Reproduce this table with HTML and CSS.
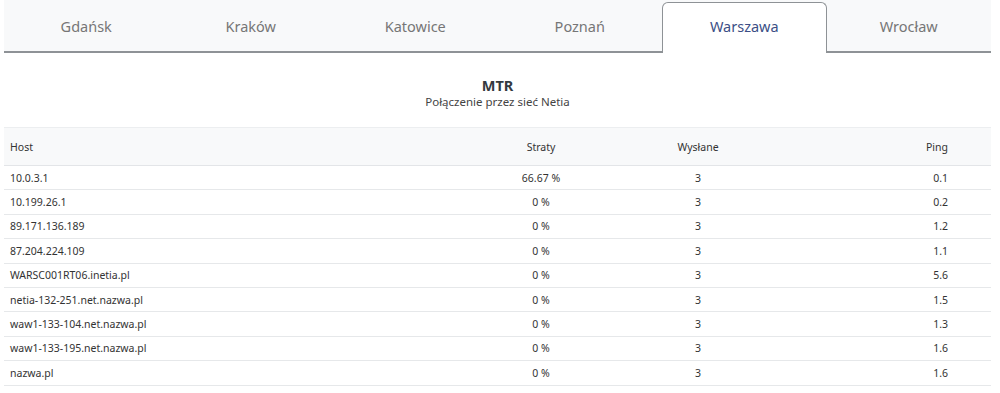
FILE: index.html
```html
<!DOCTYPE html>
<html lang="pl">
<head>
<meta charset="utf-8">
<title>MTR</title>
<link rel="stylesheet" href="styles.css">
</head>
<body>
<div class="page">
  <nav class="tabs">
    <a class="tab">Gdańsk</a>
    <a class="tab">Kraków</a>
    <a class="tab">Katowice</a>
    <a class="tab">Poznań</a>
    <a class="tab active">Warszawa</a>
    <a class="tab">Wrocław</a>
  </nav>
  <header class="head">
    <h1 class="title">MTR</h1>
    <p class="subtitle">Połączenie przez sieć Netia</p>
  </header>
  <table class="mtr">
    <colgroup>
      <col class="c-host"><col class="c-loss"><col class="c-sent"><col class="c-ping">
    </colgroup>
    <thead>
      <tr><th class="host">Host</th><th class="mid">Straty</th><th class="mid">Wysłane</th><th class="ping">Ping</th></tr>
    </thead>
    <tbody>
      <tr><td class="host">10.0.3.1</td><td class="mid">66.67 %</td><td class="mid">3</td><td class="ping">0.1</td></tr>
      <tr><td class="host">10.199.26.1</td><td class="mid">0 %</td><td class="mid">3</td><td class="ping">0.2</td></tr>
      <tr><td class="host">89.171.136.189</td><td class="mid">0 %</td><td class="mid">3</td><td class="ping">1.2</td></tr>
      <tr><td class="host">87.204.224.109</td><td class="mid">0 %</td><td class="mid">3</td><td class="ping">1.1</td></tr>
      <tr><td class="host">WARSC001RT06.inetia.pl</td><td class="mid">0 %</td><td class="mid">3</td><td class="ping">5.6</td></tr>
      <tr><td class="host">netia-132-251.net.nazwa.pl</td><td class="mid">0 %</td><td class="mid">3</td><td class="ping">1.5</td></tr>
      <tr><td class="host">waw1-133-104.net.nazwa.pl</td><td class="mid">0 %</td><td class="mid">3</td><td class="ping">1.3</td></tr>
      <tr><td class="host">waw1-133-195.net.nazwa.pl</td><td class="mid">0 %</td><td class="mid">3</td><td class="ping">1.6</td></tr>
      <tr><td class="host">nazwa.pl</td><td class="mid">0 %</td><td class="mid">3</td><td class="ping">1.6</td></tr>
    </tbody>
  </table>
</div>
</body>
</html>
```

FILE: styles.css
```css
* { box-sizing: border-box; }
html, body { margin: 0; padding: 0; background: #ffffff; }
body {
  font-family: "Noto Sans", "Open Sans", "DejaVu Sans", sans-serif;
  color: #3a3f45;
}
.page {
  width: 987px;
  margin-left: 4px;
}
.tabs {
  display: flex;
  height: 53px;
  padding-top: 2px;
  background: #f8f9fa;
  border-bottom: 2px solid #8e9296;
}
.tab {
  flex: 0 0 164.5px;
  display: flex;
  align-items: center;
  justify-content: center;
  font-size: 14.5px;
  color: #767676;
  padding-bottom: 2px;
}
.tab.active {
  background: #ffffff;
  color: #3c4f86;
  border: 1px solid #8e9296;
  border-bottom: none;
  border-radius: 6px 6px 0 0;
  margin-bottom: -2px;
  padding-bottom: 4px;
}
.head {
  text-align: center;
  padding-top: 22px;
  height: 74px;
}
.title {
  margin: 0;
  font-size: 14.5px;
  font-weight: 700;
  line-height: 20px;
  color: #343a40;
}
.subtitle {
  margin: 0;
  font-size: 11.5px;
  line-height: 14px;
  color: #444;
}
.mtr {
  width: 987px;
  border-collapse: collapse;
  table-layout: fixed;
  font-size: 10.5px;
  color: #333;
}
.c-host { width: 459px; }
.c-loss { width: 156px; }
.c-sent { width: 158px; }
.c-ping { width: 214px; }
.mtr thead tr {
  background: #f8f9fa;
  border-top: 1px solid #eceef0;
  border-bottom: 1px solid #e3e5e8;
}
.mtr th {
  font-weight: 400;
  height: 38px;
  padding: 0;
}
.mtr td {
  height: 24.4px;
  padding: 0;
}
.mtr tbody tr { border-bottom: 1px solid #e6e8ea; }
.host { text-align: left; padding-left: 6px !important; }
.mid { text-align: center; }
.ping { text-align: right; padding-right: 43px !important; }
```
